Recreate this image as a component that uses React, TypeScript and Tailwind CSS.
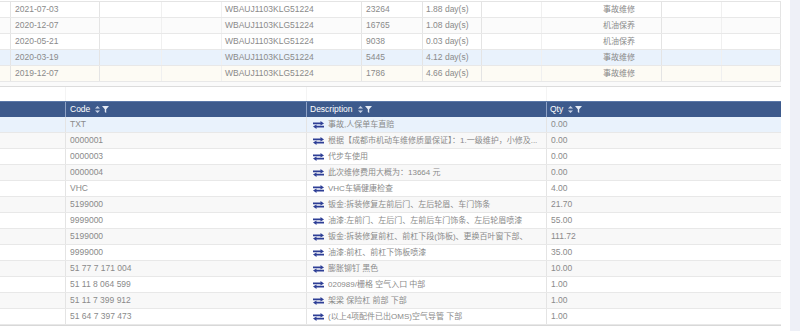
import React from "react";

const topRows = [
  { d: "2021-07-03", km: "23264", days: "1.88 day(s)", t: "事故维修", bg: "bg-white" },
  { d: "2020-12-07", km: "16765", days: "1.08 day(s)", t: "机油保养", bg: "bg-[#fbfbfb]" },
  { d: "2020-05-21", km: "9038", days: "0.03 day(s)", t: "机油保养", bg: "bg-white" },
  { d: "2020-03-19", km: "5445", days: "4.12 day(s)", t: "事故维修", bg: "bg-[#e9f2fc]" },
  { d: "2019-12-07", km: "1786", days: "4.66 day(s)", t: "事故维修", bg: "bg-[#fdfbf4]" },
];

const rows = [
  ["TXT", "事故,人保单车直赔", "0.00"],
  ["0000001", "根据【成都市机动车维修质量保证】：1.一级维护，小修及...", "0.00"],
  ["0000003", "代步车使用", "0.00"],
  ["0000004", "此次维修费用大概为：13664 元", "0.00"],
  ["VHC", "VHC车辆健康检查", "4.00"],
  ["5199000", "钣金:拆装修复左前后门、左后轮眉、车门饰条", "21.70"],
  ["9999000", "油漆:左前门、左后门、左前后车门饰条、左后轮眉喷漆", "55.00"],
  ["5199000", "钣金:拆装修复前杠、前杠下段(饰板)、更换百叶窗下部、", "111.72"],
  ["9999000", "油漆:前杠、前杠下饰板喷漆", "35.00"],
  ["51 77 7 171 004", "膨胀铆钉 黑色", "10.00"],
  ["51 11 8 064 599", "020989/栅格 空气入口 中部", "1.00"],
  ["51 11 7 399 912", "架梁 保险杠 前部 下部", "1.00"],
  ["51 64 7 397 473", "(以上4项配件已出OMS)空气导管 下部", "1.00"],
];

function SortFilter() {
  return (
    <span className="ml-[5px] inline-flex items-center gap-[2px]">
      <svg width="5" height="7" viewBox="0 0 5 7">
        <path d="M2.5 0 L5 2.6 L0 2.6 Z" fill="#c9d3e6" />
        <path d="M2.5 7 L5 4.4 L0 4.4 Z" fill="#c9d3e6" />
      </svg>
      <svg width="7" height="7" viewBox="0 0 7 7">
        <path d="M0 0 H7 L4.2 3.2 V7 L2.8 6 V3.2 Z" fill="#e6ebf5" />
      </svg>
    </span>
  );
}

function Swap() {
  return (
    <svg width="11" height="8" viewBox="0 0 11 8" className="mr-[4px] shrink-0">
      <path d="M0 1.5 H7.5 V0 L11 2.4 L7.5 4.6 V3.3 H0 Z" fill="#2e3f96" />
      <path d="M11 4.7 H3.5 V3.4 L0 5.6 L3.5 8 V6.5 H11 Z" fill="#2e3f96" />
    </svg>
  );
}

export default function App() {
  const tc = "border-r border-[#e4e4e4] h-full flex items-center overflow-hidden whitespace-nowrap";
  return (
    <div className="flex w-[800px] h-[331px] overflow-hidden bg-white font-['Liberation_Sans','Noto_Sans_CJK_SC',sans-serif] text-[8.5px] text-[#8a8a8a]">
      <div className="w-[790px] flex flex-col">
        <div className="w-[781px]">
          <div className="h-[2px] border-b border-[#e4e4e4]" />
          {topRows.map((r, i) => (
            <div
              key={i}
              className={`grid grid-cols-[11px_89px_62px_60px_140px_61px_59px_60px_120px_60px_59px] h-[16px] border-b border-[#e8e8e8] ${r.bg}`}
            >
              <div className={tc} />
              <div className={`${tc} pl-[4px]`}>{r.d}</div>
              <div className={`${tc} border-[#f0f0f0]`} />
              <div className={`${tc} border-[#f0f0f0]`} />
              <div className={`${tc} pl-[3px]`}>WBAUJ1103KLG51224</div>
              <div className={`${tc} pl-[4px]`}>{r.km}</div>
              <div className={`${tc} pl-[3px]`}>{r.days}</div>
              <div className={`${tc} border-[#f0f0f0]`} />
              <div className={`${tc} pl-[61px] text-[8px]`}>{r.t}</div>
              <div className={`${tc} border-[#f0f0f0]`} />
              <div className={tc} />
            </div>
          ))}
          <div className="h-[5px] bg-[#fafafa] border-b border-[#dcdcdc]" />
        </div>
        <div className="h-[14px] w-[781px] grid grid-cols-[66px_241px_240px_234px]">
          <div className="border-r border-[#f4f4f4]" />
          <div className="border-r border-[#f4f4f4]" />
          <div className="border-r border-[#f4f4f4]" />
          <div />
        </div>
        <div className="w-[781px] h-[16px] bg-[#3d5a8c] text-white grid grid-cols-[66px_241px_240px_234px] border-t border-[#5a77a8]">
          <div className="border-r border-[#8ea2c6]" />
          <div className="border-r border-[#8ea2c6] flex items-center pl-[4px]">
            Code
            <SortFilter />
          </div>
          <div className="border-r border-[#8ea2c6] flex items-center pl-[3px]">
            Description
            <SortFilter />
          </div>
          <div className="flex items-center pl-[3px]">
            Qty
            <SortFilter />
          </div>
        </div>
        <div className="w-[781px] border-b border-[#d8d8d8]">
          {rows.map((r, i) => (
            <div
              key={i}
              className={`grid grid-cols-[66px_241px_240px_234px] h-[16px] border-b border-[#e8e8e8] ${
                i === 0 ? "bg-[#e9f2fc]" : i % 2 === 1 ? "bg-[#f8f8f8]" : "bg-white"
              }`}
            >
              <div className="border-r border-[#e4e4e4]" />
              <div className="border-r border-[#e4e4e4] flex items-center pl-[4px] whitespace-nowrap">{r[0]}</div>
              <div className="border-r border-[#e4e4e4] flex items-center pl-[6px] overflow-hidden">
                <Swap />
                <span className="whitespace-nowrap text-[8px]">{r[1]}</span>
              </div>
              <div className="flex items-center pl-[4px]">{r[2]}</div>
            </div>
          ))}
        </div>
      </div>
      <div className="w-[10px] bg-[#eef0f7]" />
    </div>
  );
}
